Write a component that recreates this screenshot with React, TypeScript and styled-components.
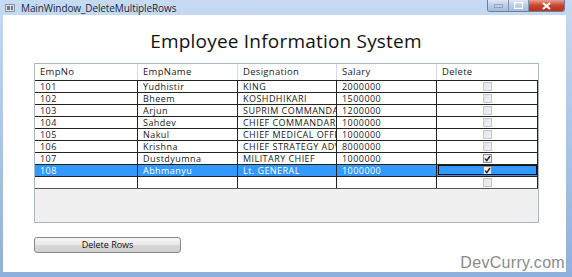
import React from "react";
import styled, {createGlobalStyle} from "styled-components";

const GlobalStyle = createGlobalStyle`
  html, body {
    margin: 0;
    padding: 0;
    width: 572px;
    height: 277px;
    overflow: hidden;
    background: #6f95c8;
  }
  * { box-sizing: border-box; }
`

const Frame = styled.div`
  width: 572px;
  height: 277px;
  display: flex;
  flex-direction: column;
  background: linear-gradient(180deg, #c6daf2 0%, #b5cdec 30%, #8fb0dc 100%);
  padding: 0 6px 5px 3px;
  font-family: "Open Sans", "DejaVu Sans", sans-serif;
`

const TitleBar = styled.div`
  height: 15px;
  display: flex;
  align-items: center;
  position: relative;
`

const AppIcon = styled.div`
  width: 10px;
  height: 8px;
  margin: 0 6px 0 2px;
  background: #d8dde4;
  border: 1px solid #8b97a6;
  display: flex;
  gap: 1px;
  padding: 1px;
  span {
    width: 3px;
    background: #6e7c8e;
  }
`

const Title = styled.div`
  font-size: 10px;
  color: #1b2a3c;
  letter-spacing: -0.1px;
`

const Controls = styled.div`
  position: absolute;
  right: 1px;
  top: 0;
  display: flex;
  height: 12px;
  border: 1px solid #6b7f9a;
  border-top: none;
  border-radius: 0 0 3px 3px;
  overflow: hidden;
`

const CtlButton = styled.div<{ $close?: boolean }>`
  width: ${p => (p.$close ? 36 : 20)}px;
  height: 100%;
  display: flex;
  align-items: center;
  justify-content: center;
  background: ${p => p.$close
    ? "linear-gradient(180deg, #e8a08f 0%, #c8452e 50%, #b8321c 100%)"
    : "linear-gradient(180deg, #dfe9f5 0%, #b9cde6 50%, #a6bcdb 100%)"};
  border-left: 1px solid #7d92b0;
  &:first-child { border-left: none; }
`

const Content = styled.div`
  flex: 1;
  background: #fff;
  display: flex;
  flex-direction: column;
  padding: 0 28px 0 31px;
  position: relative;
`

const Heading = styled.h1`
  margin: 13px 0 0;
  text-align: center;
  font-family: "Open Sans", sans-serif;
  font-weight: 400;
  font-size: 19px;
  line-height: 26px;
  color: #111;
  letter-spacing: 0.2px;
`

const GridBox = styled.div`
  margin-top: 9px;
  width: 505px;
  height: 160px;
  background: #f0f0f0;
  border: 1px solid #a8b8cc;
  display: flex;
  flex-direction: column;
`

const Row = styled.div`
  display: grid;
  grid-template-columns: 103px 100px 99px 100px 101px;
`

const HeadCell = styled.div`
  height: 16px;
  background: #fff;
  border-right: 1px solid #d5dbe3;
  font-size: 9.5px;
  letter-spacing: 0.3px;
  line-height: 16px;
  padding-left: 5px;
  color: #222;
  &:last-child { border-right: none; }
`

const Cell = styled.div<{ $sel?: boolean; $focus?: boolean }>`
  height: 12px;
  background: ${p => (p.$sel ? "#3399ff" : "#fff")};
  color: ${p => (p.$sel ? "#fff" : "#1a1a1a")};
  border-top: 1px solid #222;
  border-right: 1px solid #222;
  font-size: 9px;
  letter-spacing: 0.45px;
  line-height: 11px;
  padding-left: 5px;
  white-space: nowrap;
  overflow: hidden;
  display: flex;
  align-items: center;
  ${p => p.$focus ? "outline: 1px solid #111; outline-offset: -2px;" : ""}
`

const CheckCell = styled(Cell)`
  justify-content: center;
  padding-left: 0;
`

const Check = styled.div<{ $on?: boolean }>`
  width: 9px;
  height: 9px;
  border: 1px solid ${p => (p.$on ? "#8e8f8f" : "#c3c6ca")};
  background: ${p => (p.$on ? "linear-gradient(135deg, #f4f4f4, #e2e2e2)" : "linear-gradient(135deg, #e2e4e7, #eef0f2)")};
  display: flex;
  align-items: center;
  justify-content: center;
`

const BottomLine = styled.div`
  height: 1px;
  background: #555;
  width: 503px;
`

const Button = styled.button`
  margin-top: 14px;
  width: 147px;
  height: 16px;
  border: 1px solid #8a8a8a;
  border-radius: 3px;
  background: linear-gradient(180deg, #f6f6f6 0%, #e8e8e8 50%, #d9d9d9 51%, #cfcfcf 100%);
  font-family: "Open Sans", sans-serif;
  font-size: 9px;
  color: #111;
  padding: 0;
  line-height: 14px;
`

const Watermark = styled.div`
  position: absolute;
  right: 1px;
  bottom: 0;
  font-family: "Liberation Sans", Arial, sans-serif;
  font-size: 16px;
  color: #8a8a8a;
  letter-spacing: 0.3px;
`

type Emp = { no: string; name: string; des: string; sal: string; del: boolean }

const rows: Emp[] = [
  {no: "101", name: "Yudhistir", des: "KING", sal: "2000000", del: false},
  {no: "102", name: "Bheem", des: "KOSHDHIKARI", sal: "1500000", del: false},
  {no: "103", name: "Arjun", des: "SUPRIM COMMANDAR", sal: "1200000", del: false},
  {no: "104", name: "Sahdev", des: "CHIEF COMMANDAR", sal: "1000000", del: false},
  {no: "105", name: "Nakul", des: "CHIEF MEDICAL OFFICER", sal: "1000000", del: false},
  {no: "106", name: "Krishna", des: "CHIEF STRATEGY ADVISOR", sal: "8000000", del: false},
  {no: "107", name: "Dustdyumna", des: "MILITARY CHIEF", sal: "1000000", del: true},
  {no: "108", name: "Abhmanyu", des: "Lt. GENERAL", sal: "1000000", del: true},
]

const Tick = () => (
  <svg width="7" height="7" viewBox="0 0 7 7">
    <path d="M1 3.6 L2.8 5.6 L6 1" stroke="#1a1a2a" strokeWidth="1.4" fill="none"/>
  </svg>
)

const App = () => {
  return (
    <>
      <GlobalStyle/>
      <Frame>
        <TitleBar>
          <AppIcon><span/><span/></AppIcon>
          <Title>MainWindow_DeleteMultipleRows</Title>
          <Controls>
            <CtlButton>
              <svg width="9" height="4"><rect x="0" y="1" width="9" height="2" fill="#fff" stroke="#3c4f6b" strokeWidth="0.6"/></svg>
            </CtlButton>
            <CtlButton>
              <svg width="9" height="7"><rect x="0.5" y="0.5" width="8" height="6" fill="none" stroke="#fff" strokeWidth="1.4"/></svg>
            </CtlButton>
            <CtlButton $close>
              <svg width="9" height="8"><path d="M1 1 L8 7 M8 1 L1 7" stroke="#fff" strokeWidth="2"/></svg>
            </CtlButton>
          </Controls>
        </TitleBar>
        <Content>
          <Heading>Employee Information System</Heading>
          <GridBox>
            <Row>
              <HeadCell>EmpNo</HeadCell>
              <HeadCell>EmpName</HeadCell>
              <HeadCell>Designation</HeadCell>
              <HeadCell>Salary</HeadCell>
              <HeadCell>Delete</HeadCell>
            </Row>
            {rows.map((r, i) => {
              const sel = i === rows.length - 1
              return (
                <Row key={r.no}>
                  <Cell $sel={sel}>{r.no}</Cell>
                  <Cell $sel={sel}>{r.name}</Cell>
                  <Cell $sel={sel}>{r.des}</Cell>
                  <Cell $sel={sel}>{r.sal}</Cell>
                  <CheckCell $sel={sel} $focus={sel}>
                    <Check $on={r.del}>{r.del && <Tick/>}</Check>
                  </CheckCell>
                </Row>
              )
            })}
            <Row>
              <Cell/>
              <Cell/>
              <Cell/>
              <Cell/>
              <CheckCell><Check/></CheckCell>
            </Row>
            <BottomLine/>
          </GridBox>
          <Button>Delete Rows</Button>
          <Watermark>DevCurry.com</Watermark>
        </Content>
      </Frame>
    </>
  )
}

export default App
